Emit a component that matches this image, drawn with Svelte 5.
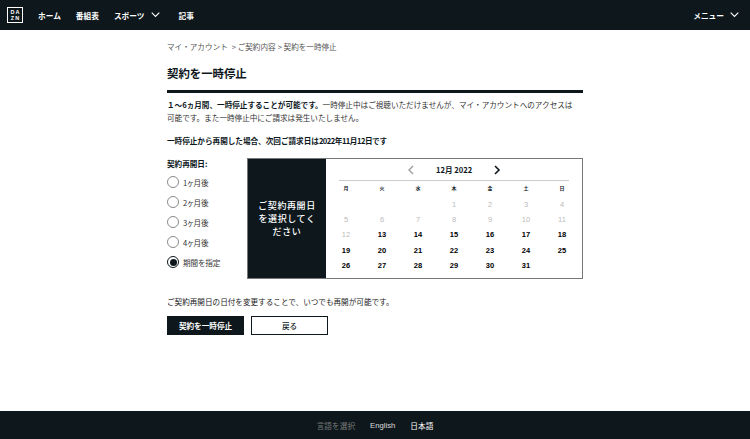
<script>
  const nav = ['ホーム', '番組表', 'スポーツ', '記事'];
  const options = ['1ヶ月後', '2ヶ月後', '3ヶ月後', '4ヶ月後', '期間を指定'];
  const weekdays = ['月', '火', '水', '木', '金', '土', '日'];
  // null = blank cell, days up to 12 are disabled
  const days = [null, null, null, ...Array.from({ length: 31 }, (_, i) => i + 1), null];
</script>

<div class="page">
  <header class="topbar">
    <div class="logo"><span>DA</span><span>ZN</span></div>
    <nav class="nav">
      {#each nav as item}
        <a class="nav-item" class:wide={item === 'スポーツ'}>
          {item}
          {#if item === 'スポーツ'}
            <svg width="9" height="6" viewBox="0 0 9 6"><path d="M.7.7l3.8 3.8L8.3.7" fill="none" stroke="#fff" stroke-width="1.1"/></svg>
          {/if}
        </a>
      {/each}
    </nav>
    <div class="menu">
      メニュー
      <svg width="9" height="6" viewBox="0 0 9 6"><path d="M.7.7l3.8 3.8L8.3.7" fill="none" stroke="#fff" stroke-width="1.1"/></svg>
    </div>
  </header>

  <main class="content">
    <div class="crumbs">
      <span>マイ・アカウント</span>
      <span class="crumb-2">&gt; ご契約内容</span>
      <span class="crumb-3">&gt; 契約を一時停止</span>
    </div>
    <h1>契約を一時停止</h1>
    <p class="lead"><strong>１〜6ヵ月間、一時停止することが可能です。</strong>一時停止中はご視聴いただけませんが、マイ・アカウントへのアクセスは可能です。また一時停止中にご請求は発生いたしません。</p>
    <p class="next"><strong>一時停止から再開した場合、次回ご請求日は<span class="date">2022年11月12日</span>です</strong></p>

    <div class="picker">
      <div class="radios">
        <div class="radios-label">契約再開日:</div>
        {#each options as opt, i}
          <div class="radio-row">
            <span class="radio" class:on={i === 4}></span>
            <span class="radio-text">{opt}</span>
          </div>
        {/each}
      </div>
      <div class="cal-box">
        <div class="cal-side">ご契約再開日を選択してください</div>
        <div class="cal">
          <div class="cal-head">
            <svg width="7" height="10" viewBox="0 0 7 10"><path d="M6 1L2 5l4 4" fill="none" stroke="#9a9a9a" stroke-width="1.3"/></svg>
            <span class="month">12月 2022</span>
            <svg width="7" height="10" viewBox="0 0 7 10"><path d="M1 1l4 4-4 4" fill="none" stroke="#0d171c" stroke-width="1.6"/></svg>
          </div>
          <div class="week">
            {#each weekdays as d}<span>{d}</span>{/each}
          </div>
          <div class="grid">
            {#each days as d}
              <span class="day" class:off={d !== null && d <= 12}>{d ?? ''}</span>
            {/each}
          </div>
        </div>
      </div>
    </div>

    <p class="note">ご契約再開日の日付を変更することで、いつでも再開が可能です。</p>
    <div class="actions">
      <button class="btn primary">契約を一時停止</button>
      <button class="btn">戻る</button>
    </div>
  </main>

  <footer class="footer">
    <span class="lang-label">言語を選択</span>
    <span class="lang-en">English</span>
    <span class="current">日本語</span>
  </footer>
</div>

<style>
  :global(body) {
    margin: 0;
    background: #fff;
  }

  .page {
    width: 750px;
    height: 439px;
    display: flex;
    flex-direction: column;
    font-family: "Noto Sans CJK JP", "Noto Sans", sans-serif;
    color: #0d171c;
    overflow: hidden;
  }

  .topbar {
    height: 30px;
    flex: none;
    background: #0d171c;
    color: #fff;
    display: flex;
    align-items: center;
    padding: 0 7px;
    font-size: 7.7px;
    font-weight: 700;
  }

  .logo {
    width: 16px;
    height: 16px;
    border: 1px solid #fff;
    box-sizing: border-box;
    display: flex;
    flex-direction: column;
    align-items: center;
    justify-content: center;
    font-family: "Liberation Sans", sans-serif;
    font-size: 5.5px;
    line-height: 6px;
    letter-spacing: 1px;
  }

  .logo span {
    margin-right: -1px;
  }

  .nav {
    display: flex;
    align-items: center;
    margin-left: 15px;
    gap: 15px;
  }

  .nav-item {
    display: flex;
    align-items: center;
    gap: 6px;
  }

  .nav-item.wide {
    margin-right: 4px;
  }

  .menu {
    margin-left: auto;
    margin-right: 4px;
    display: flex;
    align-items: center;
    gap: 6px;
  }

  .content {
    width: 416px;
    margin: 0 auto;
    flex: 1;
  }

  .crumbs {
    margin-top: 11px;
    height: 11px;
    line-height: 11px;
    font-size: 7.6px;
    color: #555;
    display: flex;
  }

  .crumb-2 {
    margin-left: 4px;
  }

  .crumb-3 {
    margin-left: 2px;
  }

  h1 {
    margin: 12px 0 0;
    font-size: 11.4px;
    line-height: 18px;
    font-weight: 700;
    padding-bottom: 8px;
    border-bottom: 3px solid #0d171c;
  }

  .lead {
    margin: 5px 0 0;
    padding-right: 4px;
    font-size: 7.6px;
    line-height: 13px;
    color: #333;
  }

  .lead strong,
  .next strong {
    color: #0d171c;
  }

  .next {
    margin: 10px 0 0;
    font-size: 7.6px;
    line-height: 13px;
  }

  .date {
    letter-spacing: -0.5px;
  }

  .picker {
    display: flex;
    margin-top: 11px;
  }

  .radios {
    width: 80px;
    font-size: 7.6px;
    color: #333;
  }

  .radios-label {
    font-weight: 700;
    color: #0d171c;
    line-height: 12px;
    margin-bottom: 2px;
  }

  .radio-row {
    height: 20px;
    display: flex;
    align-items: center;
    gap: 4px;
  }

  .radio-text {
    font-feature-settings: "palt";
  }

  .radio {
    width: 12px;
    height: 12px;
    border-radius: 50%;
    border: 1px solid #8a8a8a;
    box-sizing: border-box;
    flex: none;
    position: relative;
  }

  .radio.on {
    border: 1.5px solid #0d171c;
  }

  .radio.on::after {
    content: '';
    position: absolute;
    inset: 1.5px;
    border-radius: 50%;
    background: #0d171c;
  }

  .cal-box {
    width: 336px;
    height: 121px;
    box-sizing: border-box;
    border: 1px solid #777;
    display: flex;
  }

  .cal-side {
    width: 78px;
    flex: none;
    background: #0d171c;
    color: #fff;
    font-size: 9px;
    font-weight: 500;
    line-height: 13px;
    letter-spacing: 0.6px;
    text-align: center;
    display: flex;
    align-items: center;
    padding: 0 8px;
    box-sizing: border-box;
  }

  .cal {
    flex: 1;
    min-width: 0;
    padding: 0 13px;
  }

  .cal-head {
    height: 21px;
    display: flex;
    align-items: center;
    justify-content: center;
    gap: 22px;
    border-bottom: 1px solid #ccc;
  }

  .month {
    font-size: 7.6px;
    font-weight: 700;
    width: 36px;
    text-align: center;
    white-space: nowrap;
  }

  .week,
  .grid {
    display: grid;
    grid-template-columns: repeat(7, 36px);
    margin-left: -11px;
    text-align: center;
    justify-items: center;
  }

  .week {
    font-size: 5px;
    font-weight: 700;
    height: 14px;
    line-height: 14px;
  }

  .grid {
    grid-auto-rows: 15.2px;
    margin-top: 2px;
    font-family: "Liberation Sans", sans-serif;
    font-size: 7.5px;
    font-weight: 700;
    color: #000;
  }

  .day {
    line-height: 15px;
  }

  .day.off {
    color: #bbb;
    font-weight: 400;
  }

  .note {
    margin: 16px 0 0;
    font-size: 7.6px;
    line-height: 13px;
    color: #222;
  }

  .actions {
    display: flex;
    gap: 7px;
    margin-top: 8px;
  }

  .btn {
    width: 77px;
    height: 19px;
    padding: 0;
    box-sizing: border-box;
    border: 1px solid #0d171c;
    background: #fff;
    color: #0d171c;
    font-family: inherit;
    font-size: 7.6px;
    font-weight: 500;
  }

  .btn.primary {
    background: #0d171c;
    color: #fff;
    font-weight: 700;
  }

  .footer {
    height: 28px;
    flex: none;
    background: #0d171c;
    color: #ddd;
    font-size: 7.7px;
    display: flex;
    align-items: center;
    justify-content: center;
    gap: 15px;
  }

  .lang-label {
    color: #777;
  }

  .lang-en {
    font-family: "Liberation Sans", sans-serif;
  }

  .current {
    color: #fff;
  }
</style>
